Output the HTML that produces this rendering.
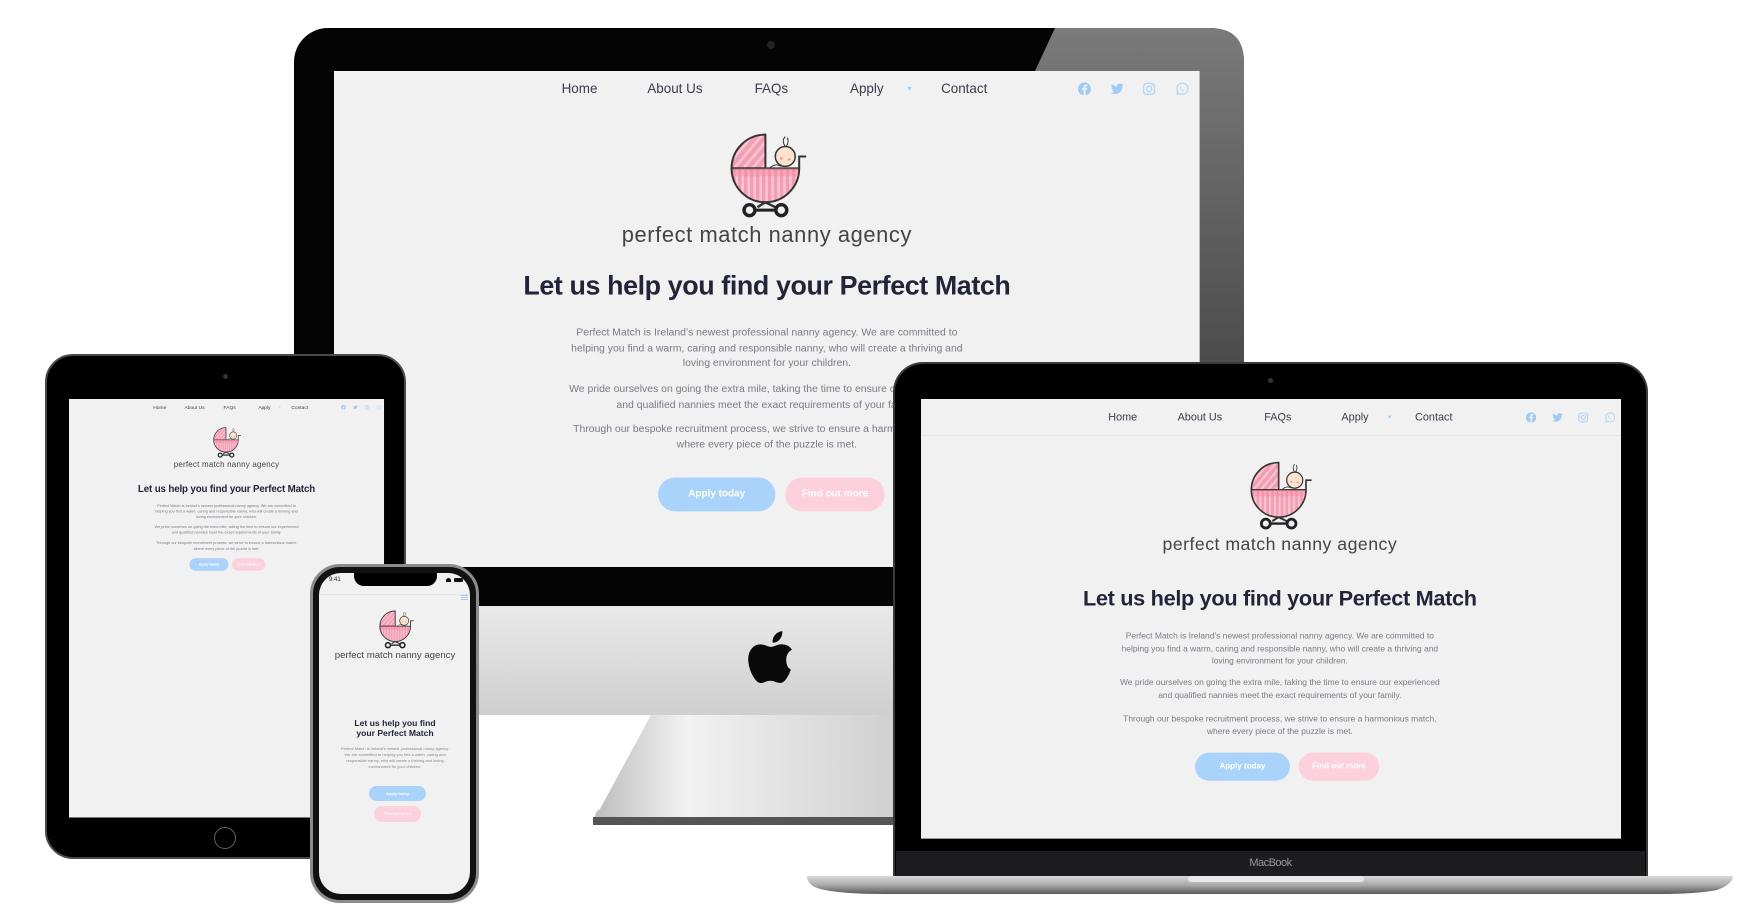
<!DOCTYPE html>
<html><head><meta charset="utf-8">
<style>
*{margin:0;padding:0;box-sizing:border-box}
body{width:1752px;height:922px;background:#fff;position:relative;overflow:hidden;font-family:"Liberation Sans",sans-serif}
.abs{position:absolute}
.site{position:absolute;left:0;top:0;width:871px;background:#f1f1f1;transform-origin:0 0;overflow:hidden}
.site .n{position:absolute;font-size:13.5px;line-height:20px;color:#3b3b4a;transform:translateX(-50%);white-space:nowrap}
.site .c{position:absolute;left:0;width:100%;text-align:center;white-space:nowrap}
.shift .c{left:11px}
.logo{font-size:22px;line-height:28px;color:#444;letter-spacing:.6px}
.h{font-size:27px;line-height:34px;color:#23233a;font-weight:bold;letter-spacing:-.4px}
.p{font-size:10.5px;line-height:15.5px;color:#7a7a85}
.btn{position:absolute;border-radius:18px;color:#fff;font-weight:bold;font-size:10px;text-align:center}
.ic{position:absolute;width:14px;height:14px}
</style></head><body>
<svg width="0" height="0" style="position:absolute">
<defs>
<pattern id="vs" width="6" height="6" patternUnits="userSpaceOnUse"><rect width="6" height="6" fill="#f59db2"/><rect width="2.5" height="6" fill="#fbc6d3"/></pattern>
<pattern id="ds" width="7" height="7" patternUnits="userSpaceOnUse" patternTransform="rotate(40)"><rect width="7" height="7" fill="#f59db2"/><rect width="2.5" height="7" fill="#fbc6d3"/></pattern>
<symbol id="pram" viewBox="0 0 80 90">
<path d="M36 40 V6 A34 34 0 0 0 2 40 Z" fill="url(#ds)" stroke="#333" stroke-width="2"/>
<circle cx="56" cy="28" r="10" fill="#fde2cd" stroke="#333" stroke-width="1.5"/>
<circle cx="52" cy="30" r="1.2" fill="#e88"/><circle cx="60" cy="31" r="1.2" fill="#e88"/>
<path d="M56 18 Q52 12 56 8 M57 18 Q60 13 58 9" stroke="#333" stroke-width="1" fill="none"/>
<path d="M40 40 Q46 34 52 38" fill="#fff" stroke="#333" stroke-width="1"/>
<path d="M2 40 H70 A34 34 0 0 1 2 40 Z" fill="url(#vs)" stroke="#333" stroke-width="2"/>
<path d="M3 40 H69 V48 H4 Z" fill="#f48ca6" opacity=".5"/>
<path d="M70 40 V28 H77" stroke="#333" stroke-width="2" fill="none"/>
<path d="M36 74 L28 79 M36 74 L46 79" stroke="#333" stroke-width="2.5"/>
<line x1="24" y1="82" x2="48" y2="82" stroke="#222" stroke-width="3"/>
<circle cx="20" cy="82" r="5.5" fill="none" stroke="#222" stroke-width="3.5"/>
<circle cx="52" cy="82" r="5.5" fill="none" stroke="#222" stroke-width="3.5"/>
</symbol>
<symbol id="fb" viewBox="0 0 14 14"><circle cx="7" cy="7" r="6.5" fill="#9ecbf5"/><path d="M8 14 V8 H9.6 L9.9 6.2 H8 V5.2 Q8 4.4 8.8 4.4 H10 V2.8 Q7.5 2.4 6.6 3.4 Q6.1 4 6.1 5 V6.2 H4.5 V8 H6.1 V14Z" fill="#f1f1f1"/></symbol>
<symbol id="tw" viewBox="0 0 14 14"><path d="M13.5 3 Q12.7 3.4 12 3.5 Q12.8 3 13.1 2 Q12.3 2.5 11.5 2.6 Q10 1 8 1.9 Q6.6 2.8 6.9 4.6 Q3.7 4.4 1.5 1.9 Q0.5 4 2.3 5.6 Q1.6 5.6 1.1 5.3 Q1.2 7.4 3.2 8 Q2.6 8.2 2 8 Q2.6 9.7 4.4 9.9 Q2.7 11.2 0.5 11 Q3 12.6 6 12 Q12.3 10.4 12.2 4.2 Q13 3.7 13.5 3Z" fill="#9ecbf5"/></symbol>
<symbol id="ig" viewBox="0 0 14 14"><rect x="1.5" y="1.5" width="11" height="11" rx="3" fill="none" stroke="#b5d8f8" stroke-width="1.5"/><circle cx="7" cy="7" r="2.6" fill="none" stroke="#b5d8f8" stroke-width="1.5"/><circle cx="10.2" cy="3.8" r=".7" fill="#b5d8f8"/></symbol>
<symbol id="wa" viewBox="0 0 14 14"><path d="M2 12.5 L2.8 9.8 A5.6 5.6 0 1 1 4.6 11.6Z" fill="none" stroke="#b5d8f8" stroke-width="1.3"/><path d="M5 4.8 Q4.6 6.8 6.6 8.6 Q8.4 10 9.3 9.2 L8.6 8.2 L7.8 8.5 Q6.3 7.6 5.8 6.3 L6.4 5.6 L5.8 4.5Z" fill="#b5d8f8"/></symbol>
<symbol id="apple" viewBox="0 0 40 48"><path d="M33 25.5 Q33 19.5 38 16.8 Q35 12.5 30 12.3 Q27 12 24 13.4 Q21.5 14.5 20 14.5 Q18.5 14.5 15.6 13.3 Q12.8 12.2 10.6 12.3 Q5.5 12.5 2.6 17 Q-0.8 22.5 1.2 31 Q2.6 37 6 41.8 Q8.6 45.5 11.2 45.5 Q13 45.5 15 44.5 Q17.3 43.5 19.5 43.5 Q21.6 43.5 23.8 44.5 Q26 45.5 28 45.4 Q30.8 45.3 33.3 41.6 Q35.8 38 37 34 Q33 32 33 25.5Z M27.5 8 Q30 5 29.7 1 Q26 1.3 23.5 4.2 Q21 7 21.4 10.8 Q25 11 27.5 8Z" fill="#0a0a0a"/></symbol>
</defs></svg>

<!-- iMac -->
<div class="abs" style="left:294px;top:28px;width:950px;height:578px;background:#040404;border-radius:34px 34px 0 0"></div>
<svg class="abs" style="left:0;top:0" width="1752" height="922"><defs><linearGradient id="gl" x1="0" y1="0" x2="0" y2="1"><stop offset="0" stop-color="#7a7a7a"/><stop offset="1" stop-color="#2a2a2a"/></linearGradient></defs>
<path d="M1055 28 H1210 Q1244 28 1244 62 V606 H1200 V71 H1035Z" fill="url(#gl)"/></svg>
<div class="abs" style="left:767px;top:41px;width:8px;height:8px;border-radius:50%;background:#222"></div>
<div class="abs" style="left:294px;top:606px;width:950px;height:109px;background:linear-gradient(#e9e9e9,#cfcfcf);border-radius:0 0 6px 6px"></div>
<svg class="abs" style="left:747px;top:630px" width="48" height="56"><use href="#apple" width="48" height="56"/></svg>
<svg class="abs" style="left:590px;top:715px" width="320" height="115"><defs><linearGradient id="st" x1="0" y1="0" x2="1" y2="0"><stop offset="0" stop-color="#bdbdbd"/><stop offset=".3" stop-color="#f2f2f2"/><stop offset="1" stop-color="#cfcfcf"/></linearGradient></defs>
<path d="M61 0 H310 V103 H5 Q5 96 10 94Z" fill="url(#st)"/><rect x="3" y="102" width="310" height="8" fill="#555"/></svg>

<div class="site" style="left:334px;top:71px;height:499px;transform:scale(.994)">
<div class="n" style="left:247px;top:8px">Home</div><div class="n" style="left:343px;top:8px">About Us</div><div class="n" style="left:440px;top:8px">FAQs</div><div class="n" style="left:536px;top:8px">Apply</div><div class="n" style="left:579px;top:8px;color:#9ecbf5;font-size:8px">▾</div><div class="n" style="left:634px;top:8px">Contact</div>
<svg class="ic" style="left:748px;top:11px"><use href="#fb"/></svg><svg class="ic" style="left:781px;top:11px"><use href="#tw"/></svg><svg class="ic" style="left:813px;top:11px"><use href="#ig"/></svg><svg class="ic" style="left:846px;top:11px"><use href="#wa"/></svg>
<svg class="abs" style="left:398px;top:58px" width="80" height="90"><use href="#pram" width="80" height="90"/></svg>
<div class="c logo" style="top:151px">perfect match nanny agency</div>
<div class="c h" style="top:199px">Let us help you find your Perfect Match</div>
<div class="c p" style="top:256px">Perfect Match is Ireland’s newest professional nanny agency. We are committed to<br>helping you find a warm, caring and responsible nanny, who will create a thriving and<br>loving environment for your children.</div>
<div class="c p" style="top:313px">We pride ourselves on going the extra mile, taking the time to ensure our experienced<br>and qualified nannies meet the exact requirements of your family.</div>
<div class="c p" style="top:353px">Through our bespoke recruitment process, we strive to ensure a harmonious match,<br>where every piece of the puzzle is met.</div>
<div class="btn" style="left:326px;top:409px;width:118px;height:34px;line-height:34px;background:#a9d3fb">Apply today</div>
<div class="btn" style="left:454px;top:409px;width:100px;height:34px;line-height:34px;background:#fdd0de">Find out more</div>
</div>

<!-- iPad -->
<div class="abs" style="left:45px;top:354px;width:361px;height:505px;background:#000;border-radius:28px;border:2px solid #4a4a4a"></div>
<div class="abs" style="left:223px;top:374px;width:5px;height:5px;border-radius:50%;background:#333"></div>
<div class="abs" style="left:214px;top:827px;width:22px;height:22px;border-radius:50%;border:1.5px solid #666"></div>
<div class="site" style="left:69px;top:399px;height:1157px;transform:scale(.3617)">
<div class="n" style="left:251px;top:13px">Home</div><div class="n" style="left:347px;top:13px">About Us</div><div class="n" style="left:444px;top:13px">FAQs</div><div class="n" style="left:540px;top:13px">Apply</div><div class="n" style="left:583px;top:13px;color:#9ecbf5;font-size:8px">▾</div><div class="n" style="left:638px;top:13px">Contact</div>
<svg class="ic" style="left:752px;top:16px"><use href="#fb"/></svg><svg class="ic" style="left:785px;top:16px"><use href="#tw"/></svg><svg class="ic" style="left:817px;top:16px"><use href="#ig"/></svg><svg class="ic" style="left:850px;top:16px"><use href="#wa"/></svg>
<svg class="abs" style="left:398px;top:73px" width="80" height="90"><use href="#pram" width="80" height="90"/></svg>
<div class="c logo" style="top:167px">perfect match nanny agency</div>
<div class="c h" style="top:231px">Let us help you find your Perfect Match</div>
<div class="c p" style="top:288px">Perfect Match is Ireland’s newest professional nanny agency. We are committed to<br>helping you find a warm, caring and responsible nanny, who will create a thriving and<br>loving environment for your children.</div>
<div class="c p" style="top:346px">We pride ourselves on going the extra mile, taking the time to ensure our experienced<br>and qualified nannies meet the exact requirements of your family.</div>
<div class="c p" style="top:391px">Through our bespoke recruitment process, we strive to ensure a harmonious match,<br>where every piece of the puzzle is met.</div>
<div class="btn" style="left:333px;top:440px;width:108px;height:35px;line-height:35px;background:#a9d3fb">Apply today</div>
<div class="btn" style="left:451px;top:440px;width:92px;height:35px;line-height:35px;background:#fdd0de">Find out more</div>
</div>

<!-- iPhone -->
<div class="abs" style="left:310px;top:564px;width:169px;height:339px;background:#111;border-radius:30px;border:3px solid #8c8c8c"></div>
<div class="abs" style="left:319px;top:573px;width:151px;height:321px;background:#f1f1f1;border-radius:22px;overflow:hidden">
<div class="abs" style="left:35px;top:0;width:83px;height:13px;background:#000;border-radius:0 0 10px 10px"></div>
<div class="abs" style="left:10px;top:4px;font-size:6px;color:#222">9:41</div>
<div class="abs" style="left:135px;top:5px;width:9px;height:4px;background:#111;border-radius:1px"></div>
<div class="abs" style="left:127px;top:5px;width:5px;height:4px;background:#111;border-radius:3px 3px 0 0"></div>
<div class="abs" style="left:0;top:21px;width:152px;height:1px;background:#e4e4e4"></div>
<div class="abs" style="left:142px;top:22px;width:7px;height:1px;background:#9ecbf5;box-shadow:0 2px #9ecbf5,0 4px #9ecbf5"></div>
<svg class="abs" style="left:60px;top:35px" width="36" height="41"><use href="#pram" width="36" height="41"/></svg>
<div class="abs" style="left:0;width:152px;top:77px;text-align:center;font-size:9.6px;color:#444;white-space:nowrap">perfect match nanny agency</div>
<div class="abs" style="left:0;width:152px;top:145px;text-align:center;font-size:8.6px;line-height:10px;color:#23233a;font-weight:bold">Let us help you find<br>your Perfect Match</div>
<div class="abs" style="left:0;width:152px;top:173px;text-align:center;font-size:4px;line-height:6px;color:#888;white-space:nowrap">Perfect Match is Ireland's newest professional nanny agency.<br>We are committed to helping you find a warm, caring and<br>responsible nanny, who will create a thriving and loving<br>environment for your children.</div>
<div class="btn" style="left:50px;top:213px;width:57px;height:15px;line-height:15px;font-size:4px;background:#a9d3fb">Apply today</div>
<div class="btn" style="left:55px;top:233px;width:47px;height:16px;line-height:16px;font-size:4px;background:#fdd0de">Find out more</div>
</div>

<!-- MacBook -->
<div class="abs" style="left:893px;top:362px;width:755px;height:514px;background:#000;border-radius:30px 30px 0 0;border:2px solid #3a3a3a;border-bottom:none"></div>
<div class="abs" style="left:1268px;top:378px;width:5px;height:5px;border-radius:50%;background:#333"></div>
<div class="abs" style="left:896px;top:851px;width:749px;height:25px;background:#1d1d1f;color:#9a9a9a;font-size:11px;text-align:center;line-height:25px;letter-spacing:-.5px">MacBook</div>
<svg class="abs" style="left:805px;top:874px" width="932" height="24"><defs><linearGradient id="bs" x1="0" y1="0" x2="0" y2="1"><stop offset="0" stop-color="#d9d9d9"/><stop offset=".5" stop-color="#a9a9a9"/><stop offset="1" stop-color="#5a5a5a"/></linearGradient></defs>
<path d="M2 2 H928 Q928 10 912 16 Q892 20 852 20 H80 Q30 20 12 14 Q2 10 2 2Z" fill="url(#bs)"/><rect x="383" y="2" width="176" height="6" rx="3" fill="#e8e8e8"/></svg>
<div class="site shift" style="left:921px;top:399px;height:547px;transform:scale(.8037)">
<div class="abs" style="left:0;top:45px;width:871px;height:1px;background:#e2e2e2"></div>
<div class="n" style="left:251px;top:13px">Home</div><div class="n" style="left:347px;top:13px">About Us</div><div class="n" style="left:444px;top:13px">FAQs</div><div class="n" style="left:540px;top:13px">Apply</div><div class="n" style="left:583px;top:13px;color:#9ecbf5;font-size:8px">▾</div><div class="n" style="left:638px;top:13px">Contact</div>
<svg class="ic" style="left:752px;top:16px"><use href="#fb"/></svg><svg class="ic" style="left:785px;top:16px"><use href="#tw"/></svg><svg class="ic" style="left:817px;top:16px"><use href="#ig"/></svg><svg class="ic" style="left:850px;top:16px"><use href="#wa"/></svg>
<svg class="abs" style="left:409px;top:73px" width="80" height="90"><use href="#pram" width="80" height="90"/></svg>
<div class="c logo" style="top:167px">perfect match nanny agency</div>
<div class="c h" style="top:231px">Let us help you find your Perfect Match</div>
<div class="c p" style="top:288px">Perfect Match is Ireland’s newest professional nanny agency. We are committed to<br>helping you find a warm, caring and responsible nanny, who will create a thriving and<br>loving environment for your children.</div>
<div class="c p" style="top:346px">We pride ourselves on going the extra mile, taking the time to ensure our experienced<br>and qualified nannies meet the exact requirements of your family.</div>
<div class="c p" style="top:391px">Through our bespoke recruitment process, we strive to ensure a harmonious match,<br>where every piece of the puzzle is met.</div>
<div class="btn" style="left:341px;top:440px;width:118px;height:35px;line-height:35px;background:#a9d3fb">Apply today</div>
<div class="btn" style="left:470px;top:440px;width:100px;height:35px;line-height:35px;background:#fdd0de">Find out more</div>
</div>
</body></html>
